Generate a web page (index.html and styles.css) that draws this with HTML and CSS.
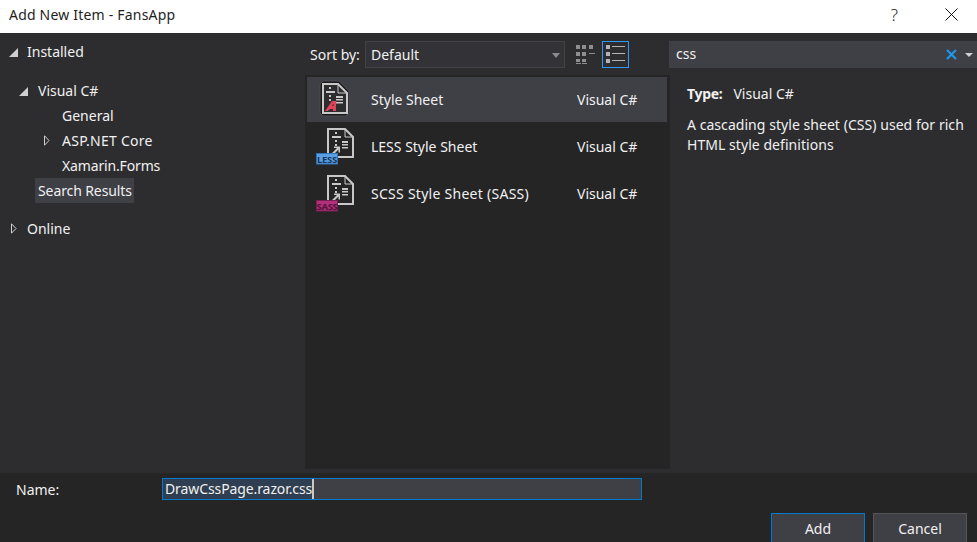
FILE: index.html
```html
<!DOCTYPE html>
<html>
<head>
    <title>Add New Item - FansApp</title>
    <link rel="stylesheet" href="styles.css">
</head>
<body>
    <div class="titlebar">
        <span class="title">Add New Item - FansApp</span>
        <span class="help">?</span>
        <svg class="close" width="13" height="13" viewBox="0 0 13 13"><path d="M.5.5l12 12M12.5.5l-12 12" stroke="#111" fill="none"/></svg>
    </div>

    <div class="main">
        <!-- left tree -->
        <div class="tree">
            <div class="row lvl0"><i class="arrow open"></i>Installed</div>
            <div class="row lvl1 gap-big"><i class="arrow open"></i>Visual C#</div>
            <div class="row lvl2">General</div>
            <div class="row lvl2"><svg class="arrow closed" width="6" height="11" viewBox="0 0 6 11"><path d="M.5.800L5 5.500.5 10.200z" fill="none" stroke="#d0d0d0"/></svg><span class="wide">ASP.NET Core</span></div>
            <div class="row lvl2"><span class="tight">Xamarin.Forms</span></div>
            <div class="row lvl1"><span class="picked">Search Results</span></div>
            <div class="row lvl0 gap"><svg class="arrow closed" width="6" height="11" viewBox="0 0 6 11"><path d="M.5.800L5 5.500.5 10.200z" fill="none" stroke="#d0d0d0"/></svg>Online</div>
        </div>

        <!-- templates -->
        <div class="center">
            <div class="toolbar">
                <span class="sort-label">Sort by:</span>
                <div class="combo">Default<i class="combo-arrow"></i></div>
                <div class="view-btn grid">
                    <svg width="19" height="19" viewBox="0 0 19 19" fill="#8e8e8e">
                        <path d="M0 0h4v4H0zM6 0h4v4H6zM13 0h4v4h-4zM0 7h4v4H0zM6 7h4v4H6zM13 8h6v1h-6zM0 14h4v3H0zM6 14h4v3H6z"/>
                        <path d="M0 18h5v1H0zM6 18h5v1H6z"/>
                    </svg>
                </div>
                <div class="view-btn active">
                    <svg width="19" height="19" viewBox="0 0 19 19" fill="#b4b4b4">
                        <path d="M0 0h4v4H0zM6 1h13v1H6zM0 7h4v4H0zM6 8h13v1H6zM0 14h4v4H0zM6 15h13v1H6z"/>
                    </svg>
                </div>
            </div>
            <div class="list">
                <div class="item selected">
                    <svg class="item-icon" width="64" height="45" viewBox="0 0 64 45">
                        <path d="M16 4h16l10 10v22l-3 3H16l-3-3V7z" fill="#1b1b1c" stroke="#4c4c50"/>
                        <path d="M16 7h15l9 9v20H16z" fill="#2d2d30" stroke="#c8c8c8" stroke-width="2"/>
                        <path d="M31 7v9h9" fill="none" stroke="#c8c8c8"/>
                        <path d="M22 10h2v2h-2zM19 14h9v2h-9zM22 18h2v2h-2zM22 22h2v2h-2z" fill="#c8c8c8"/>
                        <path d="M29 19h7v2h-7zM29 22h7v1.500h-7zM29 25h7v1.500h-7z" fill="#c8c8c8"/>
                        <path fill-rule="evenodd" d="M18 34l7-10h4v10h-3v-2h-3l-2 2zM25 29h1.500v-2.500z" fill="#e0435a"/>
                    </svg>
                    <span class="item-name">Style Sheet</span>
                    <span class="item-type">Visual C#</span>
                </div>
                <div class="item">
                    <svg class="item-icon" width="64" height="45" viewBox="0 0 64 45">
                        <path d="M21 5h17l8 8v20H21z" fill="none" stroke="#c8c8c8" stroke-width="2"/>
                        <path d="M38 5v8h8" fill="none" stroke="#c8c8c8"/>
                        <path d="M28 8h2v2h-2zM25 12h9v2h-9zM28 16h2v2h-2zM28 20h2v2h-2zM35 17h6v2h-6zM35 20h6v1.500h-6zM35 23h6v1.500h-6z" fill="#c8c8c8"/>
                        <path d="M25 29l5-5h-3v-1.500h6v6h-1.500v-3l-5 5z" fill="#c8c8c8"/>
                        <rect x="9.500" y="29.500" width="21" height="10.500" fill="#5b9fe3" stroke="#2f74b8"/>
                        <text x="20" y="38.500" class="badge-text less">LESS</text>
                    </svg>
                    <span class="item-name">LESS Style Sheet</span>
                    <span class="item-type">Visual C#</span>
                </div>
                <div class="item">
                    <svg class="item-icon" width="64" height="45" viewBox="0 0 64 45">
                        <path d="M21 5h17l8 8v20H21z" fill="none" stroke="#c8c8c8" stroke-width="2"/>
                        <path d="M38 5v8h8" fill="none" stroke="#c8c8c8"/>
                        <path d="M28 8h2v2h-2zM25 12h9v2h-9zM28 16h2v2h-2zM28 20h2v2h-2zM35 17h6v2h-6zM35 20h6v1.500h-6zM35 23h6v1.500h-6z" fill="#c8c8c8"/>
                        <path d="M25 29l5-5h-3v-1.500h6v6h-1.500v-3l-5 5z" fill="#c8c8c8"/>
                        <rect x="9.500" y="29.500" width="21" height="10.500" fill="#b0307a" stroke="#7a1f54"/>
                        <text x="20" y="38.500" class="badge-text sass">SASS</text>
                    </svg>
                    <span class="item-name"><span class="scss">SCSS Style Sheet (SASS)</span></span>
                    <span class="item-type">Visual C#</span>
                </div>
            </div>
        </div>

        <!-- search and description -->
        <div class="details">
            <div class="search">
                <span class="search-text">css</span>
                <svg class="search-clear" width="11" height="11" viewBox="0 0 11 11"><path d="M1 1l9 9M10 1l-9 9" stroke="#1c97ea" stroke-width="2.200" fill="none"/></svg>
                <i class="search-arrow"></i>
            </div>
            <div class="info">
                <p class="type"><b>Type:</b>Visual C#</p>
                <p class="desc">A cascading style sheet (CSS) used for rich HTML style definitions</p>
            </div>
        </div>
    </div>

    <div class="footer">
        <div class="name-row">
            <label class="name-label" for="name">Name:</label>
            <div class="name-input" id="name"><span class="name-sel">DrawCssPage.razor.css</span><i class="caret"></i></div>
        </div>
        <div class="buttons">
            <button class="btn default">Add</button>
            <button class="btn">Cancel</button>
        </div>
    </div>
</body>
</html>
```

FILE: styles.css
```css
html, body {
    height: 100%;
}
body {
    margin: 0;
    width: 977px;
    height: 542px;
    overflow: hidden;
    background-color: #252526;
    color: #f1f1f1;
    font-family: "Noto Sans", "Open Sans", sans-serif;
    font-size: 14px;
}
.titlebar {
    height: 33px;
    background-color: #fff;
    color: #1e1e1e;
    display: flex;
    align-items: center;
    padding: 0 19px 4px 9px;
    box-sizing: border-box;
}
.title {
    flex: 1;
    letter-spacing: 0.2px;
}
.help {
    font-size: 17px;
    font-weight: 300;
    margin-right: 47px;
}
.main {
    height: 440px;
    display: flex;
    background-color: #2d2d30;
}
.tree {
    width: 305px;
    padding-top: 6px;
    box-sizing: border-box;
}
.row {
    height: 25px;
    line-height: 25px;
    position: relative;
    white-space: nowrap;
}
.row.gap {
    margin-top: 13px;
}
.row.gap-big {
    margin-top: 14px;
}
.wide {
    letter-spacing: 0.25px;
}
.tight {
    letter-spacing: -0.15px;
}
.lvl0 {
    padding-left: 27px;
}
.lvl1 {
    padding-left: 38px;
}
.lvl2 {
    padding-left: 62px;
}
.picked {
    display: inline-block;
    width: 99px;
    height: 25px;
    margin-left: -3px;
    padding-left: 3px;
    box-sizing: border-box;
    letter-spacing: -0.1px;
    background-color: #3f3f46;
}
.arrow {
    position: absolute;
    top: 9px;
    width: 0;
    height: 0;
}
.lvl0 .arrow {
    left: 9px;
}
.lvl1 .arrow {
    left: 19px;
}
.arrow.open {
    border-left: 9px solid transparent;
    border-bottom: 9px solid #d0d0d0;
}
.arrow.closed {
    top: 7px;
    width: 6px;
    height: 11px;
}
.lvl0 .arrow.closed {
    left: 11px;
}
.lvl2 .arrow.closed {
    left: 44px;
}
.center {
    width: 365px;
    display: flex;
    flex-direction: column;
}
.toolbar {
    height: 42px;
    padding-top: 8px;
    box-sizing: border-box;
    display: flex;
    align-items: flex-start;
}
.sort-label {
    margin-left: 5px;
    width: 55px;
    line-height: 27px;
}
.combo {
    width: 200px;
    height: 27px;
    line-height: 25px;
    box-sizing: border-box;
    border: 1px solid #434346;
    background-color: #333337;
    padding-left: 5px;
    position: relative;
}
.combo-arrow {
    position: absolute;
    right: 4px;
    top: 11px;
    border-top: 5px solid #8a8a8a;
    border-left: 4px solid transparent;
    border-right: 4px solid transparent;
}
.view-btn {
    width: 27px;
    height: 27px;
    box-sizing: border-box;
    border: 1px solid transparent;
    display: flex;
    align-items: center;
    justify-content: center;
}
.view-btn.grid {
    margin-left: 7px;
    margin-right: 3px;
}
.view-btn.active {
    border-color: #3399ff;
}
.list {
    flex: 1;
    margin-bottom: 4px;
    padding: 2px 3px 0 2px;
    background-color: #252526;
}
.item {
    height: 45px;
    margin-bottom: 2px;
    display: flex;
    align-items: center;
    position: relative;
}
.item.selected {
    background-color: #3f3f46;
}
.item-icon {
    flex: none;
}
.badge-text {
    font-size: 9.500px;
    font-weight: bold;
    text-anchor: middle;
    letter-spacing: -0.3px;
}
.badge-text.less {
    fill: #17375c;
}
.badge-text.sass {
    fill: #55123c;
}
.item-name {
    width: 206px;
}
.scss {
    letter-spacing: 0.27px;
}
.details {
    flex: 1;
}
.search {
    height: 27px;
    margin-top: 8px;
    margin-left: -1px;
    background-color: #3f3f46;
    position: relative;
    display: flex;
    align-items: center;
    padding-left: 7px;
}
.search-text {
    flex: 1;
    margin-top: -2px;
}
.search-clear {
    margin-right: 8px;
}
.search-arrow {
    margin-right: 4px;
    border-top: 4px solid #d0d0d0;
    border-left: 4px solid transparent;
    border-right: 4px solid transparent;
}
.info {
    padding: 16px 10px 0 17px;
}
.info p {
    margin: 0;
    line-height: 20px;
}
.type b {
    margin-right: 11px;
    letter-spacing: -0.3px;
}
.desc {
    margin-top: 11px !important;
    letter-spacing: 0.05px;
}
.footer {
    height: 69px;
    position: relative;
}
.name-row {
    display: flex;
    padding-top: 5px;
    height: 22px;
}
.name-label {
    width: 162px;
    padding-left: 16px;
    box-sizing: border-box;
    line-height: 24px;
}
.name-input {
    width: 480px;
    height: 22px;
    box-sizing: border-box;
    border: 1px solid #007acc;
    background-color: #3f3f46;
    display: flex;
    line-height: 19px;
    letter-spacing: -0.1px;
}
.name-sel {
    padding-left: 2px;
    background-color: #2f3e50;
}
.caret {
    width: 2px;
    background-color: #c8c8c8;
}
.buttons {
    display: flex;
    justify-content: flex-end;
    gap: 8px;
    margin-top: 13px;
    padding-right: 10px;
}
.btn {
    width: 94px;
    height: 30px;
    border: 1px solid #555555;
    background-color: #3f3f46;
    color: #f1f1f1;
    font-family: inherit;
    font-size: 14px;
    padding: 0;
}
.btn.default {
    border-color: #007acc;
}
```
